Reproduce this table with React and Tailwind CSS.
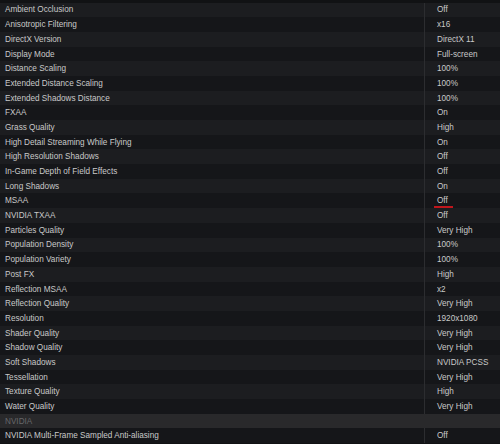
const settings = [
  ['Ambient Occlusion', 'Off'],
  ['Anisotropic Filtering', 'x16'],
  ['DirectX Version', 'DirectX 11'],
  ['Display Mode', 'Full-screen'],
  ['Distance Scaling', '100%'],
  ['Extended Distance Scaling', '100%'],
  ['Extended Shadows Distance', '100%'],
  ['FXAA', 'On'],
  ['Grass Quality', 'High'],
  ['High Detail Streaming While Flying', 'On'],
  ['High Resolution Shadows', 'Off'],
  ['In-Game Depth of Field Effects', 'Off'],
  ['Long Shadows', 'On'],
  ['MSAA', 'Off', true],
  ['NVIDIA TXAA', 'Off'],
  ['Particles Quality', 'Very High'],
  ['Population Density', '100%'],
  ['Population Variety', '100%'],
  ['Post FX', 'High'],
  ['Reflection MSAA', 'x2'],
  ['Reflection Quality', 'Very High'],
  ['Resolution', '1920x1080'],
  ['Shader Quality', 'Very High'],
  ['Shadow Quality', 'Very High'],
  ['Soft Shadows', 'NVIDIA PCSS'],
  ['Tessellation', 'Very High'],
  ['Texture Quality', 'High'],
  ['Water Quality', 'Very High'],
]

function Row({ name, value, mark, dark }) {
  return (
    <div className={`flex h-[14.7px] ${dark ? 'bg-[#151619]' : 'bg-[#1c1d20]'}`}>
      <div className="flex w-[424px] items-center pl-[5px] pt-[1.5px] text-[#c9c9c9]">{name}</div>
      <div className="h-full w-px bg-[#2c2d30]" />
      <div className="flex flex-1 items-center pl-[12px] pt-[1.5px] text-[#c9c9c9]">
        <span className="relative">
          {value}
          {mark && <span className="absolute left-[-3px] top-[9px] h-[2px] w-[19px] bg-[#c0161c]" />}
        </span>
      </div>
    </div>
  )
}

export default function App() {
  return (
    <div
      className="h-[444px] w-[500px] overflow-hidden bg-[#111214] pt-[2.5px] text-[8.2px] leading-none antialiased"
      style={{ fontFamily: '"Liberation Sans", Arial, sans-serif' }}
    >
      {settings.map(([name, value, mark], i) => (
        <Row key={name} name={name} value={value} mark={mark} dark={i % 2 === 1} />
      ))}
      <div className="flex h-[14.7px] items-center bg-[#29292b] pl-[5px] pt-[1.5px] text-[#66676a]">NVIDIA</div>
      <Row name="NVIDIA Multi-Frame Sampled Anti-aliasing" value="Off" dark />
    </div>
  )
}
